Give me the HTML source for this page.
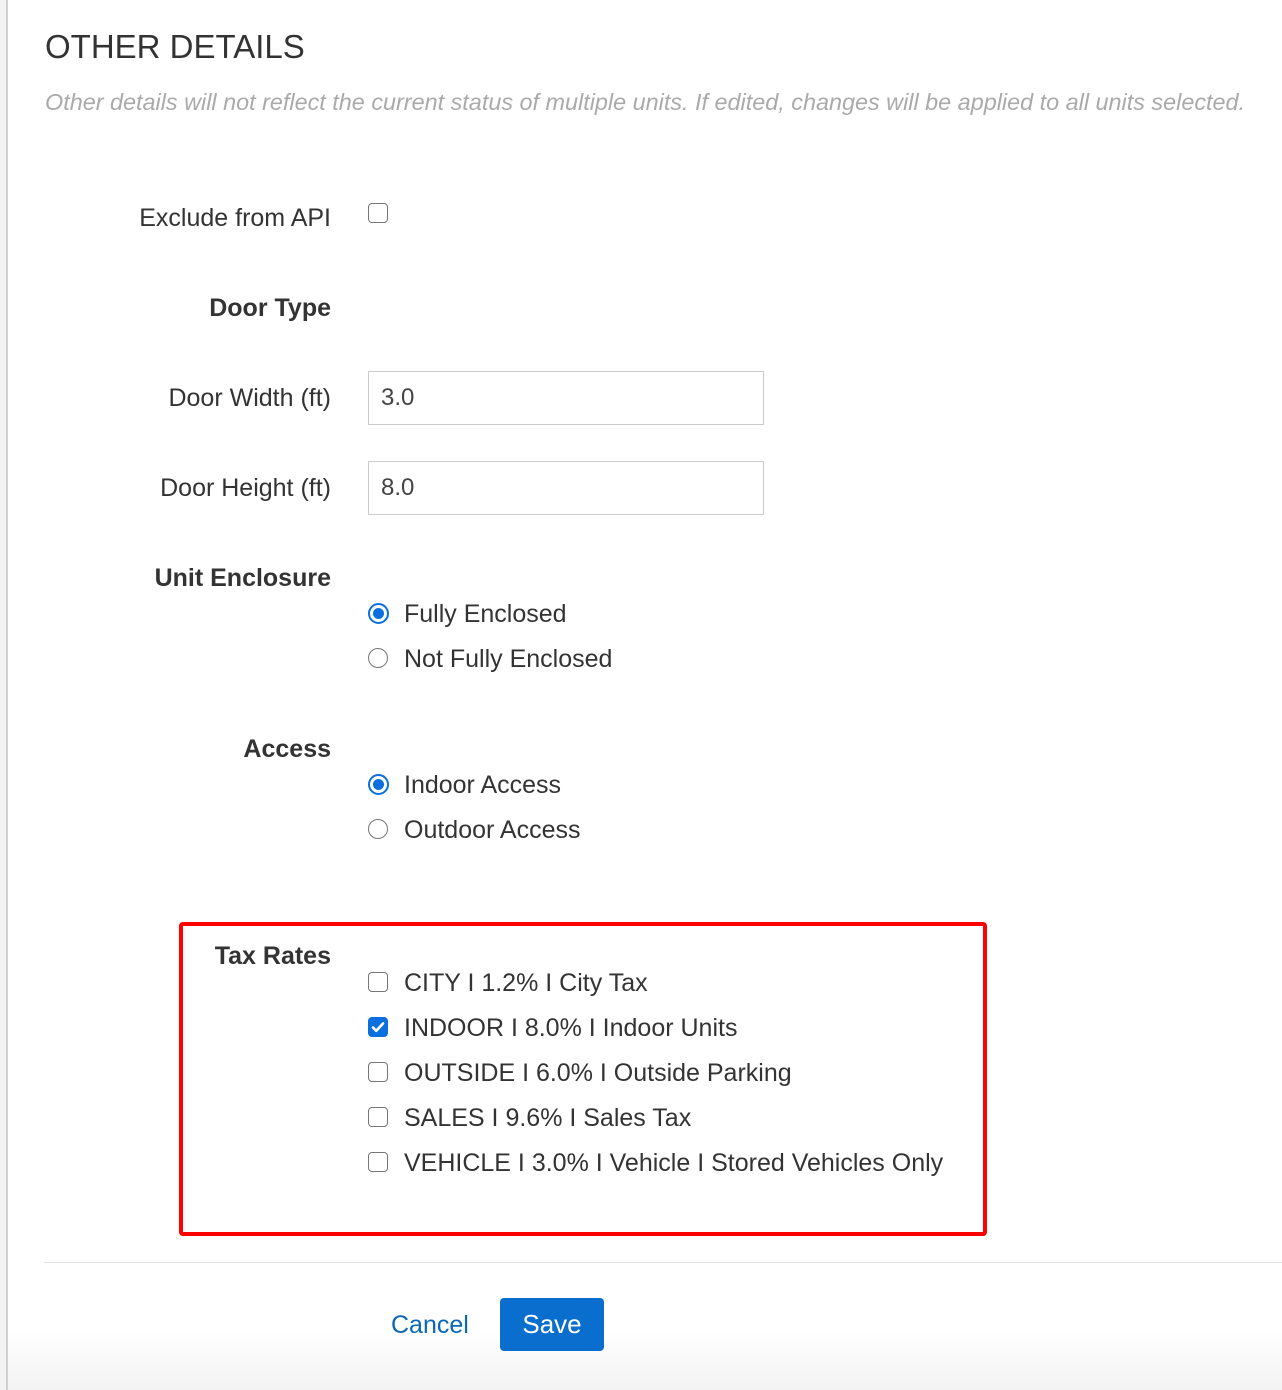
<!DOCTYPE html>
<html><head><meta charset="utf-8"><style>
html,body{margin:0;padding:0;}
body{width:1282px;height:1390px;position:relative;overflow:hidden;background:#fff;font-family:"Liberation Sans",Arial,sans-serif;color:#333;}
.side{position:absolute;left:0;top:0;width:6px;height:1390px;background:#f3f3f3;border-right:2px solid #cfcfcf;}
.bottomfade{position:absolute;left:8px;right:0;top:1330px;height:60px;background:linear-gradient(#fff,#f3f3f3);}
.abs{position:absolute;white-space:nowrap;}
.title{left:45px;top:28px;font-size:33px;color:#333;line-height:38px;}
.sub{left:45px;top:88px;font-size:23.4px;font-style:italic;color:#aaa;line-height:28px;}
.lbl{right:951px;font-size:25px;line-height:30px;text-align:right;}
.b{font-weight:bold;}
.cb{position:absolute;width:18px;height:18px;border:1.5px solid #767676;border-radius:4px;background:#fff;}
.cb.on{background:#0b6fe0;border-color:#0b6fe0;}
.rd{position:absolute;width:18px;height:18px;border:1.5px solid #767676;border-radius:50%;background:#fff;}
.rd.on{border:2px solid #0b6fe0;width:17px;height:17px;}
.rd.on::after{content:"";position:absolute;left:3px;top:3px;width:11px;height:11px;border-radius:50%;background:#0b6fe0;}
.opt{left:404px;font-size:25px;line-height:30px;}
.inp{position:absolute;left:368px;height:54px;border:1px solid #ccc;font-size:24px;line-height:52px;padding-left:12px;box-sizing:border-box;width:396px;color:#444;}
.red{position:absolute;left:179px;top:922px;width:800px;height:306px;border:4px solid #ff0000;border-radius:4px;}
.div{position:absolute;left:44px;right:0;top:1262px;height:1px;background:#e2e2e2;}
.cancel{left:391px;top:1310px;font-size:25px;color:#0a66b8;line-height:30px;}
.save{position:absolute;left:500px;top:1298px;width:104px;height:53px;background:#0a6ecf;border-radius:4px;color:#fff;font-size:26px;line-height:53px;text-align:center;}
</style></head><body>
<div class="side"></div>
<div class="bottomfade"></div>
<div class="abs title">OTHER DETAILS</div>
<div class="abs sub">Other details will not reflect the current status of multiple units. If edited, changes will be applied to all units selected.</div>

<div class="abs lbl" style="top:203px">Exclude from API</div>
<div class="cb" style="left:368px;top:203px"></div>

<div class="abs lbl b" style="top:293px">Door Type</div>

<div class="abs lbl" style="top:383px">Door Width (ft)</div>
<div class="inp" style="top:371px">3.0</div>

<div class="abs lbl" style="top:473px">Door Height (ft)</div>
<div class="inp" style="top:461px">8.0</div>

<div class="abs lbl b" style="top:563px">Unit Enclosure</div>
<div class="rd on" style="left:368px;top:603px"></div>
<div class="abs opt" style="top:599px">Fully Enclosed</div>
<div class="rd" style="left:368px;top:648px"></div>
<div class="abs opt" style="top:644px">Not Fully Enclosed</div>

<div class="abs lbl b" style="top:734px">Access</div>
<div class="rd on" style="left:368px;top:774px"></div>
<div class="abs opt" style="top:770px">Indoor Access</div>
<div class="rd" style="left:368px;top:819px"></div>
<div class="abs opt" style="top:815px">Outdoor Access</div>

<div class="red"></div>
<div class="abs lbl b" style="top:941px">Tax Rates</div>
<div class="cb" style="left:368px;top:972px"></div>
<div class="abs opt" style="top:968px">CITY I 1.2% I City Tax</div>
<div class="cb on" style="left:368px;top:1017px"><svg width="18" height="18" viewBox="0 0 18 18" style="position:absolute;left:0;top:0"><path d="M4 9.5l3.3 3.3L14 5.5" stroke="#fff" stroke-width="2.6" fill="none" stroke-linecap="round" stroke-linejoin="round"/></svg></div>
<div class="abs opt" style="top:1013px">INDOOR I 8.0% I Indoor Units</div>
<div class="cb" style="left:368px;top:1062px"></div>
<div class="abs opt" style="top:1058px">OUTSIDE I 6.0% I Outside Parking</div>
<div class="cb" style="left:368px;top:1107px"></div>
<div class="abs opt" style="top:1103px">SALES I 9.6% I Sales Tax</div>
<div class="cb" style="left:368px;top:1152px"></div>
<div class="abs opt" style="top:1148px">VEHICLE I 3.0% I Vehicle I Stored Vehicles Only</div>

<div class="div"></div>
<div class="abs cancel">Cancel</div>
<div class="save">Save</div>
</body></html>
